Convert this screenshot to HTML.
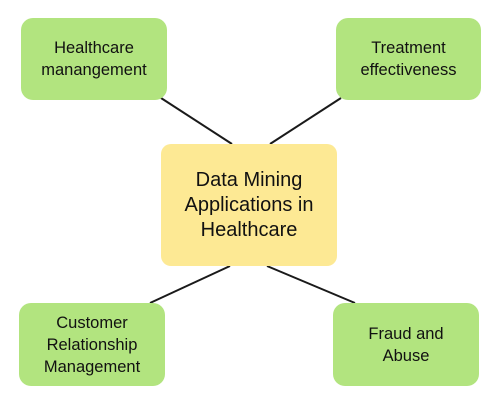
<!DOCTYPE html>
<html><head><style>
body{margin:0;width:500px;height:400px;background:#fff;position:relative;font-family:"Liberation Sans",sans-serif;color:#111;overflow:hidden}
.b{position:absolute;background:#b2e47f;border-radius:12px;display:flex;align-items:center;justify-content:center;text-align:center;font-size:16.5px;line-height:22px}
.c{background:#fde994;font-size:20px;line-height:25px;border-radius:10px}
svg{position:absolute;left:0;top:0}
</style></head><body>
<svg width="500" height="400"><g stroke="#1a1a1a" stroke-width="2">
<line x1="161" y1="98" x2="232" y2="144"/><line x1="341" y1="98" x2="270" y2="144"/>
<line x1="230" y1="266" x2="150" y2="303"/><line x1="267" y1="266" x2="355" y2="303"/></g></svg>
<div class="b" style="left:21px;top:18px;width:146px;height:82px">Healthcare<br>manangement</div>
<div class="b" style="left:336px;top:18px;width:145px;height:82px">Treatment<br>effectiveness</div>
<div class="b c" style="left:161px;top:144px;width:176px;height:122px">Data Mining<br>Applications in<br>Healthcare</div>
<div class="b" style="left:19px;top:303px;width:146px;height:83px">Customer<br>Relationship<br>Management</div>
<div class="b" style="left:333px;top:303px;width:146px;height:83px">Fraud and<br>Abuse</div>
</body></html>
